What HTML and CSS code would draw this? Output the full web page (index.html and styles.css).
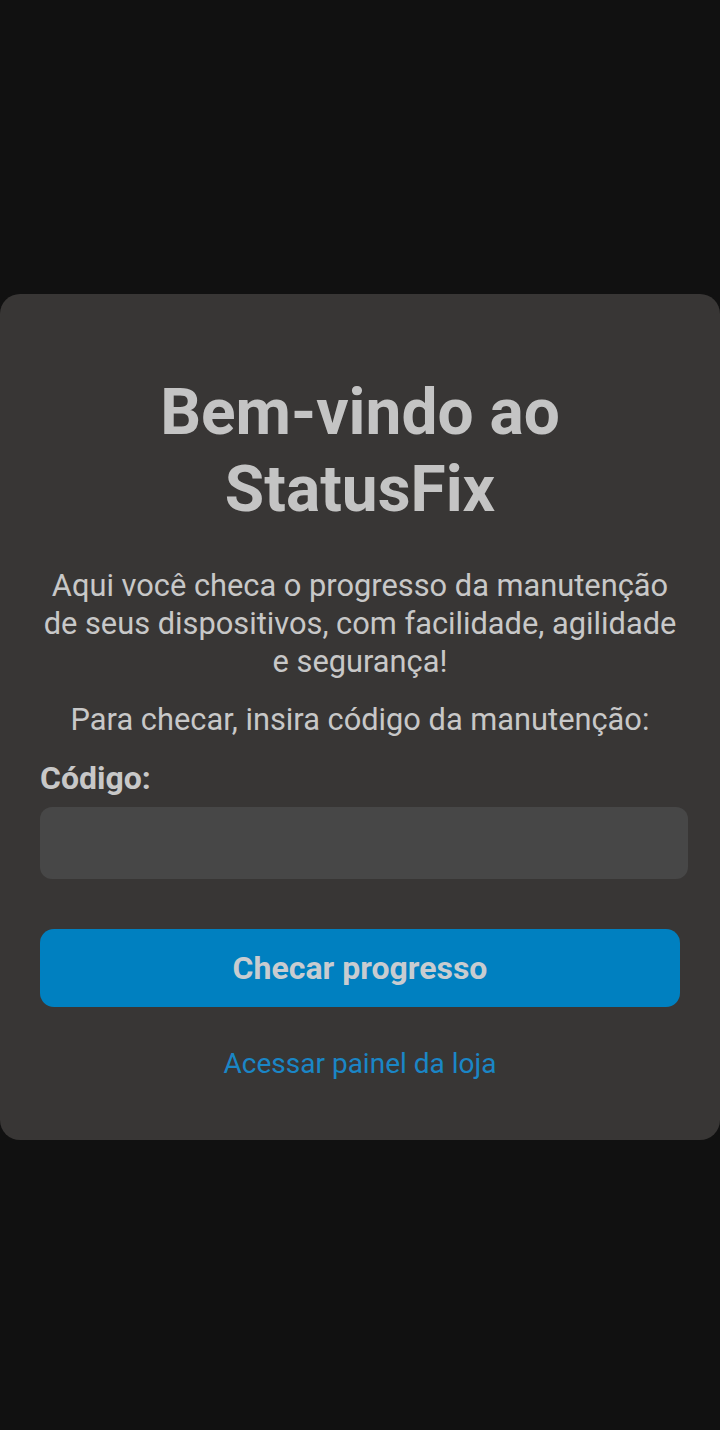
FILE: index.html
```html
<!DOCTYPE html>
<html lang="pt-BR">
<head>
<meta charset="utf-8">
<title>StatusFix</title>
<link rel="stylesheet" href="styles.css">
</head>
<body>
<main class="screen">
  <section class="card">
    <h1 class="title">Bem-vindo ao StatusFix</h1>
    <p class="intro">Aqui você checa o progresso da manutenção de seus dispositivos, com facilidade, agilidade e segurança!</p>
    <p class="prompt">Para checar, insira código da manutenção:</p>
    <form class="form">
      <label class="label" for="code">Código:</label>
      <input class="input" id="code" type="text">
      <button class="button" type="button">Checar progresso</button>
    </form>
    <a class="link" href="#">Acessar painel da loja</a>
  </section>
</main>
</body>
</html>
```
FILE: styles.css
```css
* { box-sizing: border-box; }
html, body {
  margin: 0;
  padding: 0;
  background: #111111;
  font-family: Roboto, "Noto Sans", sans-serif;
}
.screen {
  width: 720px;
  height: 1430px;
  display: flex;
  flex-direction: column;
  padding-top: 294px;
}
.card {
  background: #383635;
  border-radius: 20px;
  padding: 81px 40px 57px;
  display: flex;
  flex-direction: column;
  align-items: center;
  color: #c4c4c4;
}
.title {
  margin: 0;
  font-size: 64px;
  line-height: 76.8px;
  font-weight: 700;
  text-align: center;
  width: 440px;
}
.intro {
  margin: 38px 0 0;
  font-size: 30.8px;
  line-height: 38px;
  text-align: center;
  color: #c8c8c8;
}
.prompt {
  margin: 20px 0 0;
  font-size: 30.8px;
  line-height: 38px;
  text-align: center;
  color: #c8c8c8;
}
.form {
  align-self: stretch;
  display: flex;
  flex-direction: column;
  margin-top: 20px;
}
.label {
  font-size: 32px;
  line-height: 38px;
  font-weight: 700;
  color: #c8c8c8;
}
.input {
  margin-top: 10px;
  width: 648px;
  height: 72px;
  border: none;
  border-radius: 12px;
  background: #474747;
  outline: none;
  font: inherit;
  font-size: 28px;
  color: #cccccc;
  padding: 0 16px;
}
.button {
  margin-top: 50px;
  width: 640px;
  height: 78px;
  border: none;
  border-radius: 14px;
  background: #0080c0;
  color: #c8ccd0;
  font-family: inherit;
  font-size: 32px;
  font-weight: 700;
  padding: 0;
}
.link {
  margin-top: 38px;
  font-size: 28px;
  line-height: 38px;
  color: #1a86c6;
  text-decoration: none;
}
```
